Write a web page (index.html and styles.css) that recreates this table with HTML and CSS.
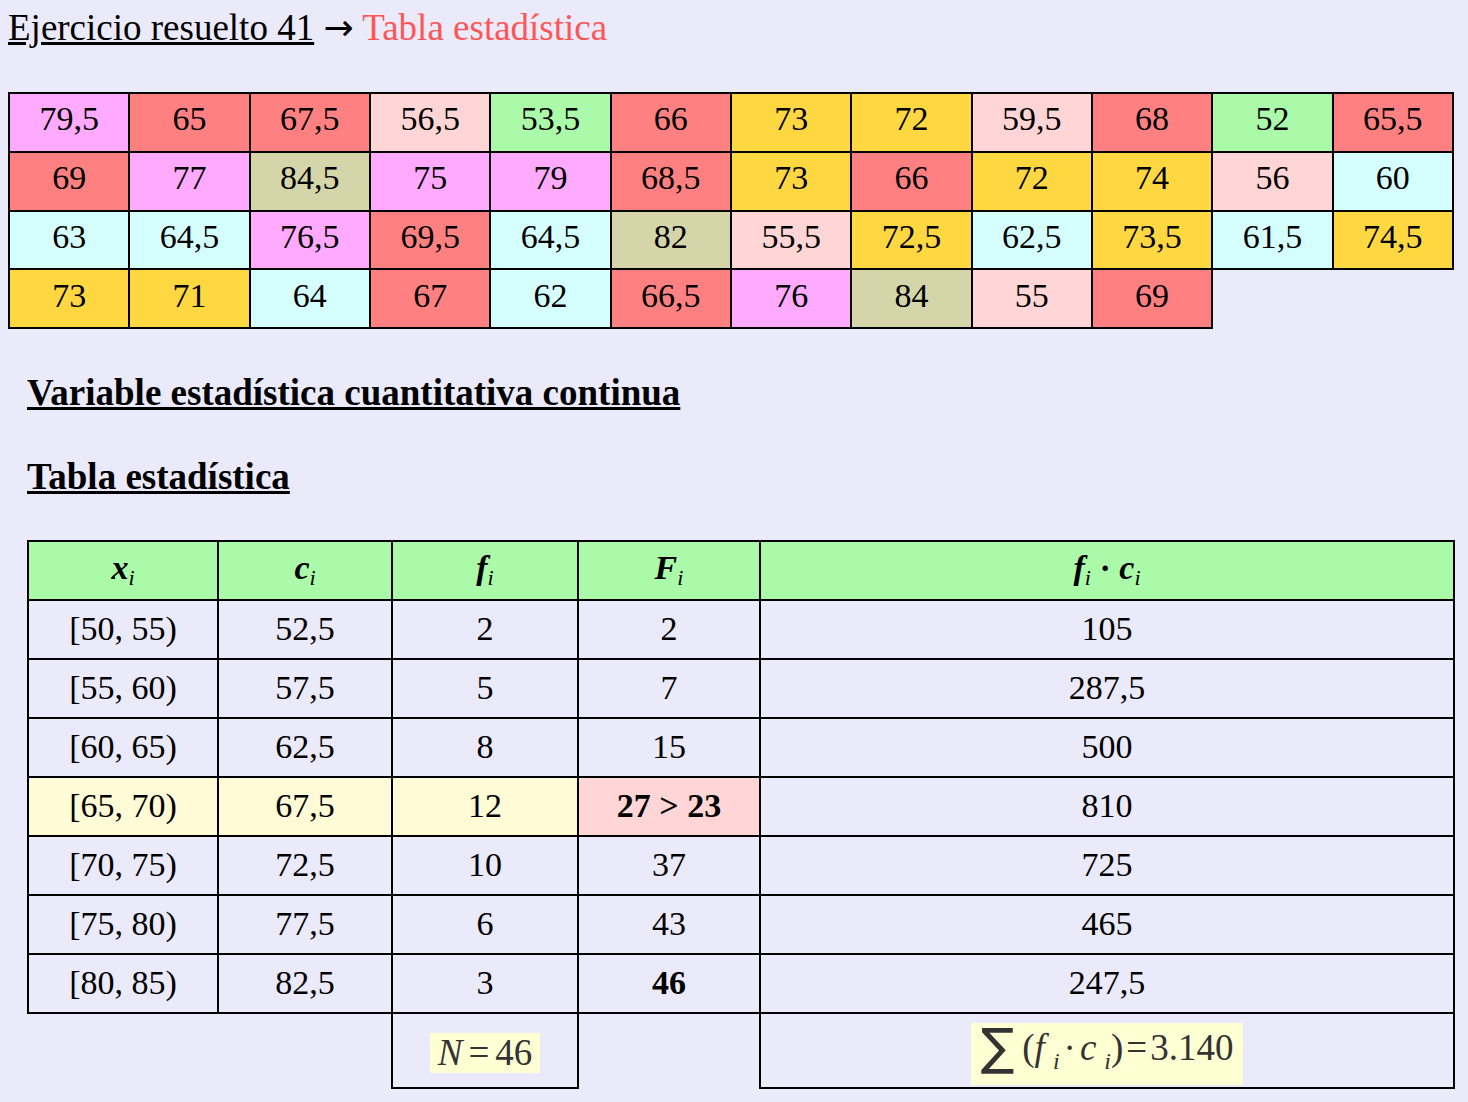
FILE: index.html
```html
<!DOCTYPE html>
<html lang="es">
<head>
<meta charset="utf-8">
<title>Tabla estadística</title>
<link rel="stylesheet" href="styles.css">
</head>
<body>
<p class="title"><a class="back" href="#">Ejercicio resuelto 41</a> <span class="arrow">→</span> <span class="current">Tabla estadística</span></p>

<table class="data">
  <tr>
    <td class="c75">79,5</td><td class="c65">65</td><td class="c65">67,5</td><td class="c55">56,5</td><td class="c50">53,5</td><td class="c65">66</td><td class="c70">73</td><td class="c70">72</td><td class="c55">59,5</td><td class="c65">68</td><td class="c50">52</td><td class="c65">65,5</td>
  </tr>
  <tr>
    <td class="c65">69</td><td class="c75">77</td><td class="c80">84,5</td><td class="c75">75</td><td class="c75">79</td><td class="c65">68,5</td><td class="c70">73</td><td class="c65">66</td><td class="c70">72</td><td class="c70">74</td><td class="c55">56</td><td class="c60">60</td>
  </tr>
  <tr>
    <td class="c60">63</td><td class="c60">64,5</td><td class="c75">76,5</td><td class="c65">69,5</td><td class="c60">64,5</td><td class="c80">82</td><td class="c55">55,5</td><td class="c70">72,5</td><td class="c60">62,5</td><td class="c70">73,5</td><td class="c60">61,5</td><td class="c70">74,5</td>
  </tr>
  <tr>
    <td class="c70">73</td><td class="c70">71</td><td class="c60">64</td><td class="c65">67</td><td class="c60">62</td><td class="c65">66,5</td><td class="c75">76</td><td class="c80">84</td><td class="c55">55</td><td class="c65">69</td>
  </tr>
</table>

<section class="content">
  <h2 class="heading">Variable estadística cuantitativa continua</h2>
  <h2 class="heading">Tabla estadística</h2>

  <table class="stats">
    <colgroup>
      <col class="w1"><col class="w2"><col class="w3"><col class="w4"><col class="w5">
    </colgroup>
    <tr class="head">
      <th><i>x</i><sub>i</sub></th>
      <th><i>c</i><sub>i</sub></th>
      <th><i>f</i><sub>i</sub></th>
      <th><i>F</i><sub>i</sub></th>
      <th><i>f</i><sub>i</sub> · <i>c</i><sub>i</sub></th>
    </tr>
    <tr><td>[50, 55)</td><td>52,5</td><td>2</td><td>2</td><td>105</td></tr>
    <tr><td>[55, 60)</td><td>57,5</td><td>5</td><td>7</td><td>287,5</td></tr>
    <tr><td>[60, 65)</td><td>62,5</td><td>8</td><td>15</td><td>500</td></tr>
    <tr class="median"><td class="hl">[65, 70)</td><td class="hl">67,5</td><td class="hl">12</td><td class="mark"><b>27 &gt; 23</b></td><td>810</td></tr>
    <tr><td>[70, 75)</td><td>72,5</td><td>10</td><td>37</td><td>725</td></tr>
    <tr><td>[75, 80)</td><td>77,5</td><td>6</td><td>43</td><td>465</td></tr>
    <tr><td>[80, 85)</td><td>82,5</td><td>3</td><td><b>46</b></td><td>247,5</td></tr>
    <tr class="foot">
      <td class="empty" colspan="2"></td>
      <td class="sum"><span class="math math-n"><i>N</i><span class="eq wide">=</span>46</span></td>
      <td class="empty"></td>
      <td class="sum"><span class="math math-sum"><span class="sigma">∑</span><span class="par">(</span><i>f</i><sub class="ms">i</sub><span class="dot">·</span><i>c</i><sub class="ms">i</sub><span class="par">)</span><span class="eq">=</span>3.140</span></td>
    </tr>
  </table>
</section>
</body>
</html>
```

FILE: styles.css
```css
html, body {
  background: #eaeafb;
}
body {
  margin: 8px;
  font-family: "Liberation Serif", "Times New Roman", serif;
  color: #000;
}
.title {
  margin: 0;
  font-size: 37px;
  line-height: 40px;
}
.title .back {
  color: #000;
  text-decoration: underline;
}
.title .arrow {
  font-family: "DejaVu Sans", sans-serif;
  font-size: 36px;
  line-height: 1;
}
.title .current {
  color: #ff5555;
}

.data {
  margin-top: 44px;
  border-collapse: collapse;
  table-layout: fixed;
  width: 1446px;
}
.data td {
  border: 2px solid #000;
  height: 50.75px;
  padding: 0 0 6px;
  text-align: center;
  font-size: 34px;
}
.c50 { background: #aafaaa; }
.c55 { background: #ffd5d5; }
.c60 { background: #d5ffff; }
.c65 { background: #ff8080; }
.c70 { background: #ffd740; }
.c75 { background: #ffaaff; }
.c80 { background: #d5d5aa; }

.content {
  margin-left: 19px;
}
.heading {
  margin: 40px 0 0;
  font-size: 37px;
  line-height: 44px;
  font-weight: bold;
  text-decoration: underline;
}
.heading:first-child {
  margin-top: 42px;
}

.stats {
  margin-top: 41px;
  border-collapse: collapse;
  table-layout: fixed;
  width: 1426px;
  font-size: 34px;
}
.w1 { width: 190px; }
.w2 { width: 174px; }
.w3 { width: 186px; }
.w4 { width: 182px; }
.w5 { width: 694px; }
.stats th, .stats td {
  border: 2px solid #000;
  height: 55px;
  padding: 0 0 2px;
  text-align: center;
}
.stats th {
  background: #aafaaa;
  font-weight: bold;
}
.stats th sub {
  font-size: 22px;
  font-weight: normal;
  font-style: italic;
  vertical-align: -6px;
}
.stats .hl {
  background: #fffbd6;
}
.stats .mark {
  background: #ffd5d5;
}
.stats .foot td {
  height: 73px;
  padding: 0;
}
.stats .foot .empty {
  border: none;
}
.math {
  display: inline-block;
  background: #ffffd4;
  color: #333;
  font-size: 37px;
  line-height: 40px;
  padding: 0 8px;
}
.math-n {
  margin-top: 4px;
}
.math-sum {
  line-height: 48px;
  padding: 0 10px;
  margin-top: 6px;
}
.math .eq {
  margin: 0 3px;
}
.math .eq.wide {
  margin: 0 6px;
}
.math .sigma {
  font-size: 50px;
  vertical-align: -4px;
  font-family: "DejaVu Sans", sans-serif;
  margin-right: 8px;
}
.math .ms {
  font-size: 24px;
  font-style: italic;
  vertical-align: -9px;
  margin-left: 8px;
}
.math .dot {
  margin: 0 4px;
}
```
